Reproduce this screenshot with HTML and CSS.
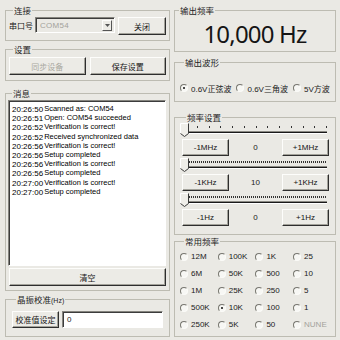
FILE: index.html
```html
<!DOCTYPE html>
<html lang="zh-CN">
<head>
<meta charset="utf-8">
<title>信号发生器</title>
<link rel="stylesheet" href="styles.css">
</head>
<body>
<div class="app">
  <div class="col">
    <fieldset class="grp g1">
      <legend>连接</legend>
      <div class="conn-row">
        <span class="lbl">串口号</span>
        <div class="combo">
          <span class="combo-val">COM54</span>
          <span class="combo-btn"><svg width="5" height="3" viewBox="0 0 5 3"><path d="M0 0h5L2.5 3z" fill="#555"/></svg></span>
        </div>
        <button class="btn close">关闭</button>
      </div>
    </fieldset>
    <fieldset class="grp g2">
      <legend>设置</legend>
      <div class="set-row">
        <button class="btn dis">同步设备</button>
        <button class="btn">保存设置</button>
      </div>
    </fieldset>
    <fieldset class="grp g3">
      <legend>消息</legend>
      <div class="log">
        <div class="ln"><span class="t">20:26:50</span><span class="m">Scanned as: COM54</span></div>
        <div class="ln"><span class="t">20:26:51</span><span class="m">Open: COM54 succeeded</span></div>
        <div class="ln"><span class="t">20:26:52</span><span class="m">Verification is correct!</span></div>
        <div class="ln"><span class="t">20:26:52</span><span class="m">Received synchronized data</span></div>
        <div class="ln"><span class="t">20:26:56</span><span class="m">Verification is correct!</span></div>
        <div class="ln"><span class="t">20:26:56</span><span class="m">Setup completed</span></div>
        <div class="ln"><span class="t">20:26:56</span><span class="m">Verification is correct!</span></div>
        <div class="ln"><span class="t">20:26:56</span><span class="m">Setup completed</span></div>
        <div class="ln"><span class="t">20:27:00</span><span class="m">Verification is correct!</span></div>
        <div class="ln"><span class="t">20:27:00</span><span class="m">Setup completed</span></div>
      </div>
      <button class="btn clear">清空</button>
    </fieldset>
    <fieldset class="grp g4">
      <legend>晶振校准<span class="unit">(Hz)</span></legend>
      <div class="cal-row">
        <button class="btn cal">校准值设定</button>
        <div class="input">0</div>
      </div>
    </fieldset>
  </div>

  <div class="col">
    <fieldset class="grp r1">
      <legend>输出频率</legend>
      <div class="freq">10,000 Hz</div>
    </fieldset>
    <fieldset class="grp r2">
      <legend>输出波形</legend>
      <div class="wave-row">
        <label class="opt"><span class="rd on"></span>0.6V正弦波</label>
        <label class="opt"><span class="rd"></span>0.6V三角波</label>
        <label class="opt"><span class="rd"></span>5V方波</label>
      </div>
    </fieldset>
    <fieldset class="grp r3">
      <legend>频率设置</legend>
      <div class="slider">
        <div class="ticks sparse"><i></i><i></i><i></i><i></i><i></i><i></i><i></i><i></i><i></i><i></i><i></i><i></i><i></i></div>
        <div class="track"></div>
        <svg class="thumb" width="9" height="14" viewBox="0 0 9 14"><path d="M0.5 10.5V0.5H8.5V10.5L4.5 13.5Z" fill="#efeee9"/><path d="M0.5 10.5V0.5H8" fill="none" stroke="#fff"/><path d="M8.5 0.5V10.5L4.5 13.5L0.5 10.5" fill="none" stroke="#3a3a3a"/></svg>
      </div>
      <div class="step-row">
        <button class="btn">-1MHz</button><span class="val">0</span><button class="btn">+1MHz</button>
      </div>
      <div class="slider">
        <div class="ticks dense"></div>
        <div class="track"></div>
        <svg class="thumb" width="9" height="14" viewBox="0 0 9 14"><path d="M0.5 10.5V0.5H8.5V10.5L4.5 13.5Z" fill="#efeee9"/><path d="M0.5 10.5V0.5H8" fill="none" stroke="#fff"/><path d="M8.5 0.5V10.5L4.5 13.5L0.5 10.5" fill="none" stroke="#3a3a3a"/></svg>
      </div>
      <div class="step-row">
        <button class="btn">-1KHz</button><span class="val">10</span><button class="btn">+1KHz</button>
      </div>
      <div class="slider">
        <div class="ticks dense"></div>
        <div class="track"></div>
        <svg class="thumb" width="9" height="14" viewBox="0 0 9 14"><path d="M0.5 10.5V0.5H8.5V10.5L4.5 13.5Z" fill="#efeee9"/><path d="M0.5 10.5V0.5H8" fill="none" stroke="#fff"/><path d="M8.5 0.5V10.5L4.5 13.5L0.5 10.5" fill="none" stroke="#3a3a3a"/></svg>
      </div>
      <div class="step-row">
        <button class="btn">-1Hz</button><span class="val">0</span><button class="btn">+1Hz</button>
      </div>
    </fieldset>
    <fieldset class="grp r4">
      <legend>常用频率</legend>
      <div class="presets">
        <label class="opt"><span class="rd"></span>12M</label>
        <label class="opt"><span class="rd"></span>100K</label>
        <label class="opt"><span class="rd"></span>1K</label>
        <label class="opt"><span class="rd"></span>25</label>
        <label class="opt"><span class="rd"></span>6M</label>
        <label class="opt"><span class="rd"></span>50K</label>
        <label class="opt"><span class="rd"></span>500</label>
        <label class="opt"><span class="rd"></span>10</label>
        <label class="opt"><span class="rd"></span>1M</label>
        <label class="opt"><span class="rd"></span>25K</label>
        <label class="opt"><span class="rd"></span>250</label>
        <label class="opt"><span class="rd"></span>5</label>
        <label class="opt"><span class="rd"></span>500K</label>
        <label class="opt"><span class="rd on"></span>10K</label>
        <label class="opt"><span class="rd"></span>100</label>
        <label class="opt"><span class="rd"></span>1</label>
        <label class="opt"><span class="rd"></span>250K</label>
        <label class="opt"><span class="rd"></span>5K</label>
        <label class="opt"><span class="rd"></span>50</label>
        <label class="opt dim"><span class="rd"></span>NUNE</label>
      </div>
    </fieldset>
  </div>
</div>
</body>
</html>
```

FILE: styles.css
```css
* { box-sizing: border-box; margin: 0; padding: 0; }
html, body {
  width: 340px;
  height: 340px;
  overflow: hidden;
  background: #eae9e4;
}
body {
  font-family: "Liberation Sans", "Noto Sans CJK SC", sans-serif;
  font-size: 8px;
  color: #1a1a1a;
}
.app {
  display: grid;
  grid-template-columns: 165px 162px;
  column-gap: 4px;
  padding: 5px 0 0 5px;
}
.col { display: flex; flex-direction: column; }

.grp {
  border: 1px solid #bdbcb2;
  min-width: 0;
}
legend {
  font-family: "Noto Sans CJK SC", sans-serif;
  font-size: 8.5px;
  line-height: 10px;
  height: 10px;
  padding: 0 1px;
  margin-left: 4px;
  background: #eae9e4;
  color: #1e1e1e;
}
.unit { font-family: "Liberation Sans", sans-serif; font-size: 7px; }

.btn {
  font-family: "Liberation Sans", "Noto Sans CJK SC", sans-serif;
  font-size: 8px;
  color: #141414;
  background: #ecebe6;
  border: 1px solid;
  border-color: #fdfdfb #2e2e2e #2e2e2e #fdfdfb;
  box-shadow: inset -1px -1px 0 #a3a29a;
}
.btn.dis { color: #a9a8a0; }

/* 连接 */
.g1 { height: 36px; padding: 2px 3px 0 3px; }
.conn-row { display: flex; align-items: flex-start; }
.lbl { width: 26px; line-height: 18px; font-size: 8px; font-family: "Noto Sans CJK SC", sans-serif; }
.combo {
  width: 80px;
  height: 16px;
  display: flex;
  align-items: center;
  justify-content: space-between;
  border: 1px solid;
  border-color: #85847e #fff #fff #85847e;
  box-shadow: inset 1px 1px 0 #3c3c3c;
  padding: 2px 2px 1px 4px;
}
.combo-val { color: #a3a29b; font-size: 8px; letter-spacing: 0.3px; }
.combo-btn {
  width: 10px;
  height: 11px;
  display: flex;
  align-items: center;
  justify-content: center;
  background: #ecebe6;
  border: 1px solid;
  border-color: #fdfdfb #555 #555 #fdfdfb;
}
.close { width: 48px; height: 18px; margin-left: 3px; }

/* 设置 */
.g2 { height: 37px; margin-top: 3px; padding: 3px 3px 0 3px; }
.set-row { display: grid; grid-template-columns: 1fr 1fr; column-gap: 4px; }
.set-row .btn { height: 18px; }

/* 消息 */
.g3 { height: 203px; margin-top: 7px; padding: 2px 3px 0 2px; display: flex; flex-direction: column; }
.log {
  height: 166px;
  background: #fff;
  border: 1px solid;
  border-color: #85847e #fff #fff #85847e;
  box-shadow: inset 1px 1px 0 #3c3c3c;
  padding: 4px 0 0 3px;
}
.ln { line-height: 9.2px; height: 9.2px; white-space: nowrap; color: #000; }
.t { font-size: 8px; }
.m { font-size: 7.5px; margin-left: 1px; position: relative; top: -1px; }
.clear { height: 18px; margin: 2px 0 0 1px; }

/* 晶振校准 */
.g4 { height: 43px; margin-top: 3px; padding: 7px 3px 0 6px; }
.cal-row { display: flex; align-items: flex-start; }
.cal { width: 47px; height: 17px; }
.input {
  width: 101px;
  height: 17px;
  margin-left: 3px;
  background: #fff;
  border: 1px solid;
  border-color: #85847e #fff #fff #85847e;
  box-shadow: inset 1px 1px 0 #3c3c3c;
  padding-left: 4px;
  line-height: 15px;
  font-size: 8px;
}

/* 输出频率 */
.r1 { height: 47px; }
.freq {
  font-family: "Noto Sans", sans-serif;
  font-size: 24px;
  letter-spacing: -0.8px;
  line-height: 28px;
  padding-top: 5px;
  text-align: center;
  color: #151515;
}

/* radio */
.opt { display: flex; align-items: center; white-space: nowrap; font-family: "Liberation Sans", "Noto Sans CJK SC", sans-serif; font-size: 8px; }
.opt.dim { color: #a3a29b; }
.rd {
  width: 8px;
  height: 8px;
  border-radius: 50%;
  border: 1px solid;
  border-color: #77766f #fbfbf8 #fbfbf8 #77766f;
  background: #f7f7f4;
  margin-right: 3px;
  position: relative;
  flex: none;
}
.rd.on::after {
  content: "";
  position: absolute;
  left: 2px;
  top: 2px;
  width: 2px;
  height: 2px;
  border-radius: 50%;
  background: #111;
}

/* 输出波形 */
.r2 { height: 45px; margin-top: 5px; padding: 16px 0 0 5px; }
.wave-row { display: flex; height: 10px; column-gap: 5px; }

/* 频率设置 */
.r3 { height: 123px; margin-top: 10px; padding: 0 6px 0 7px; }
.slider { position: relative; height: 17px; margin: 0 2px 0 3px; padding-top: 4px; }
.ticks { height: 2px; }
.ticks.sparse { display: flex; justify-content: space-between; }
.ticks.sparse i { width: 1px; height: 2px; background: #333; }
.ticks.dense { background: repeating-linear-gradient(to right, #333 0 1px, transparent 1px 2px); }
.track {
  margin-top: 3px;
  height: 3px;
  border-top: 1px solid #8a8983;
  border-bottom: 1px solid #fff;
  background: #1a1a1a;
}
.thumb { position: absolute; left: -5px; top: 1px; }
.step-row {
  display: grid;
  grid-template-columns: 47px 1fr 47px;
  align-items: center;
  height: 17px;
  margin-bottom: 1px;
}
.step-row .btn { height: 17px; }
.val { text-align: center; font-size: 8px; }

/* 常用频率 */
.r4 { height: 101px; margin-top: 1px; padding: 2px 0 0 5px; }
.presets { display: grid; grid-template-columns: repeat(4, 37.7px); grid-auto-rows: 17px; }
```
